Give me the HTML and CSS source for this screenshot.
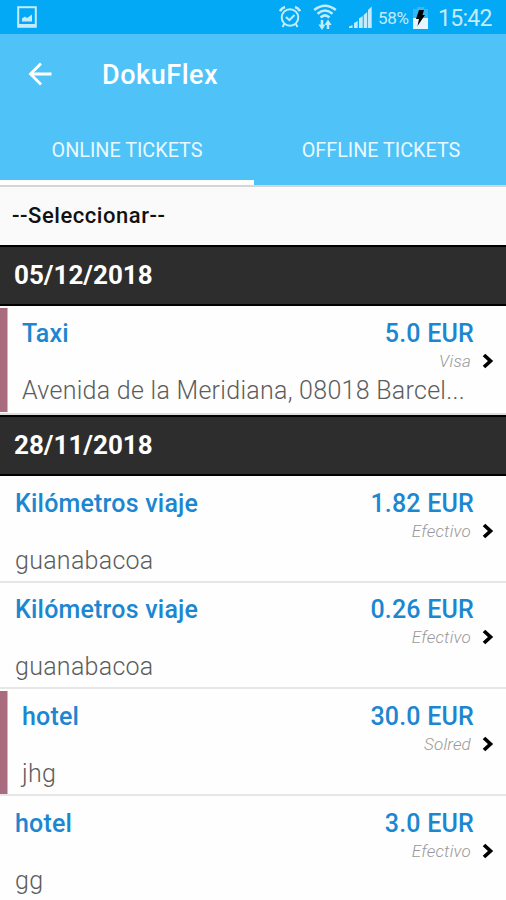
FILE: index.html
```html
<!DOCTYPE html>
<html lang="es">
<head>
  <meta charset="UTF-8">
  <title>DokuFlex</title>
  <link rel="stylesheet" href="styles.css">
</head>
<body>
  <div class="status-bar">
    <svg class="icon-picture" width="20" height="22" viewBox="0 0 20 22">
      <rect x="1.2" y="1.2" width="17.6" height="19.6" fill="none" stroke="currentColor" stroke-width="2"/>
      <path d="M1 18h18v3H1z" fill="currentColor"/>
      <path d="M5 15.5v-3l3-2 2 1.5 5-3.5v7z" fill="currentColor"/>
    </svg>
    <div class="status-right">
      <svg class="icon-alarm" width="22" height="24" viewBox="0 0 22 24" fill="none" stroke="currentColor" stroke-width="2">
        <circle cx="11" cy="12.5" r="8.3"/>
        <path d="M7 12l3.4 3.2L15.5 10"/>
        <path d="M1 6.2Q2.6 3 6 2M21 6.2Q19.4 3 16 2" stroke-width="2.6"/>
        <path d="M5.5 18.5L3.5 22M16.5 18.5l2 3.5"/>
      </svg>
      <svg class="icon-wifi" width="24" height="27" viewBox="0 0 24 27" fill="none" stroke="currentColor" stroke-width="2.5">
        <path d="M1.2 6Q12-2.6 22.8 6"/>
        <path d="M4.5 9.8Q12 3.2 19.5 9.8"/>
        <path d="M7.6 13.5Q12 9.2 16.4 13.5"/>
        <path d="M9 16v6M15 25v-6"/>
        <path d="M5.4 20.5h7.2L9 26zM11.4 21h7.2L15 15.5z" fill="currentColor" stroke="none"/>
      </svg>
      <svg class="icon-signal" width="24" height="23" viewBox="0 0 24 23" fill="currentColor">
        <path d="M1 22v-1.5L4.5 19v3zM6 22v-5l3.7-2v7zM11 22v-9.5l3.7-2.5V22zM15.7 22V9l3.5-3V22zM20 22V4L23.7.5V22z"/>
      </svg>
      <span class="battery-text">58%</span>
      <svg class="icon-battery" width="15" height="22" viewBox="0 0 15 22">
        <path d="M4 0h7v2h4v10H0V2h4z" fill="#35b7f3"/>
        <path d="M0 11h15v11H0z" fill="#e4f5fd"/>
        <path d="M6 3h5L9.5 8H12L4.5 19 6 12H3z" fill="#000"/>
      </svg>
      <span class="clock">15:42</span>
    </div>
  </div>

  <header class="app-bar">
    <div class="toolbar">
      <svg class="back" width="24" height="24" viewBox="0 0 24 24" fill="none" stroke="#fff" stroke-width="2.8">
        <path d="M23.5 12H2.5M13 1.5L2.5 12 13 22.5"/>
      </svg>
      <h1>DokuFlex</h1>
    </div>
    <nav class="tabs">
      <a class="tab active">ONLINE TICKETS</a>
      <a class="tab">OFFLINE TICKETS</a>
    </nav>
  </header>

  <div class="select">--Seleccionar--</div>

  <h2 class="date">05/12/2018</h2>
  <div class="ticket marked last">
    <div class="line">
      <span class="name">Taxi</span>
      <span class="amount">5.0 EUR</span>
    </div>
    <div class="payment">Visa
      <svg class="chevron" width="12" height="16" viewBox="0 0 12 16"><path d="M2 2l6.5 6L2 14"/></svg>
    </div>
    <p class="note">Avenida de la Meridiana, 08018 Barcel...</p>
  </div>

  <h2 class="date">28/11/2018</h2>
  <div class="ticket">
    <div class="line">
      <span class="name">Kilómetros viaje</span>
      <span class="amount">1.82 EUR</span>
    </div>
    <div class="payment">Efectivo
      <svg class="chevron" width="12" height="16" viewBox="0 0 12 16"><path d="M2 2l6.5 6L2 14"/></svg>
    </div>
    <p class="note">guanabacoa</p>
  </div>
  <div class="ticket">
    <div class="line">
      <span class="name">Kilómetros viaje</span>
      <span class="amount">0.26 EUR</span>
    </div>
    <div class="payment">Efectivo
      <svg class="chevron" width="12" height="16" viewBox="0 0 12 16"><path d="M2 2l6.5 6L2 14"/></svg>
    </div>
    <p class="note">guanabacoa</p>
  </div>
  <div class="ticket marked">
    <div class="line">
      <span class="name">hotel</span>
      <span class="amount">30.0 EUR</span>
    </div>
    <div class="payment">Solred
      <svg class="chevron" width="12" height="16" viewBox="0 0 12 16"><path d="M2 2l6.5 6L2 14"/></svg>
    </div>
    <p class="note">jhg</p>
  </div>
  <div class="ticket">
    <div class="line">
      <span class="name">hotel</span>
      <span class="amount">3.0 EUR</span>
    </div>
    <div class="payment">Efectivo
      <svg class="chevron" width="12" height="16" viewBox="0 0 12 16"><path d="M2 2l6.5 6L2 14"/></svg>
    </div>
    <p class="note">gg</p>
  </div>
</body>
</html>
```
FILE: styles.css
```css
* {
  box-sizing: border-box;
}

body {
  margin: 0;
  height: 900px;
  overflow: hidden;
  background-color: #fefefe;
  font-family: Roboto, sans-serif;
}

h1, h2, p {
  margin: 0;
}

svg {
  display: block;
  flex: none;
}

.status-bar {
  display: flex;
  justify-content: space-between;
  height: 34px;
  padding: 0 14px 0 17px;
  background-color: #03a9f4;
  color: #c4ebfc;
}

.icon-picture {
  margin-top: 6px;
}

.status-right {
  display: flex;
}

.icon-alarm {
  margin: 5px 12px 0 1px;
}

.icon-wifi {
  margin: 4px 11px 0 0;
}

.icon-signal {
  margin: 6px 6px 0 0;
}

.battery-text {
  width: 31px;
  margin-right: 4px;
  font-size: 17px;
  line-height: 36px;
  letter-spacing: -0.3px;
  white-space: nowrap;
}

.icon-battery {
  margin: 7px 10px 0 0;
}

.clock {
  width: 54px;
  font-size: 23px;
  line-height: 37px;
  letter-spacing: -0.7px;
  white-space: nowrap;
}

.app-bar {
  height: 151px;
  background-color: #4fc3f7;
  color: #fff;
}

.toolbar {
  display: flex;
  align-items: center;
  height: 80px;
  padding-left: 28px;
}

.toolbar h1 {
  margin-left: 50px;
  padding-top: 2px;
  font-size: 27px;
  font-weight: 500;
  letter-spacing: 0.55px;
}

.tabs {
  display: flex;
  height: 71px;
}

.tab {
  flex: none;
  width: 254px;
  padding-top: 23px;
  border-bottom: 5px solid transparent;
  color: #e9f8ff;
  font-size: 19.8px;
  line-height: 28px;
  text-align: center;
  white-space: nowrap;
}

.tab.active {
  border-bottom-color: #fff;
}

.select {
  height: 60px;
  padding-left: 12px;
  border-top: 2px solid #d5d5d6;
  background-color: #fafafa;
  color: #111;
  font-size: 22px;
  font-weight: 500;
  line-height: 57px;
  letter-spacing: 0.55px;
}

.date {
  height: 61px;
  padding-left: 14px;
  border: solid #000;
  border-width: 2px 0;
  background-color: #2d2d2d;
  color: #fff;
  font-size: 26px;
  font-weight: 700;
  line-height: 57px;
}

.ticket {
  height: 106.7px;
  padding: 9.8px 0 0 15px;
  border-bottom: 2px solid #e6e6e6;
}

.ticket.last {
  height: 109px;
  padding-top: 10px;
  border-bottom-color: #ddd;
}

.ticket.marked {
  padding-left: 22px;
  background: linear-gradient(#a96b7e, #a96b7e) 0 2px / 7.5px 104px no-repeat;
}

.line {
  display: flex;
  justify-content: space-between;
  padding-right: 32px;
  color: #1b87d0;
  font-size: 25px;
  font-weight: 500;
  line-height: 36px;
  letter-spacing: 0.2px;
}

.payment {
  display: flex;
  justify-content: flex-end;
  align-items: center;
  gap: 11px;
  height: 18px;
  padding-right: 12px;
  color: #999;
  font-size: 17px;
  font-style: italic;
  font-weight: 300;
  letter-spacing: 0.2px;
}

.chevron {
  fill: none;
  stroke: #000;
  stroke-width: 3.7;
}

.note {
  color: #5c5c5c;
  font-size: 25px;
  font-weight: 300;
  line-height: 41px;
  letter-spacing: 0.28px;
  white-space: nowrap;
}
```
